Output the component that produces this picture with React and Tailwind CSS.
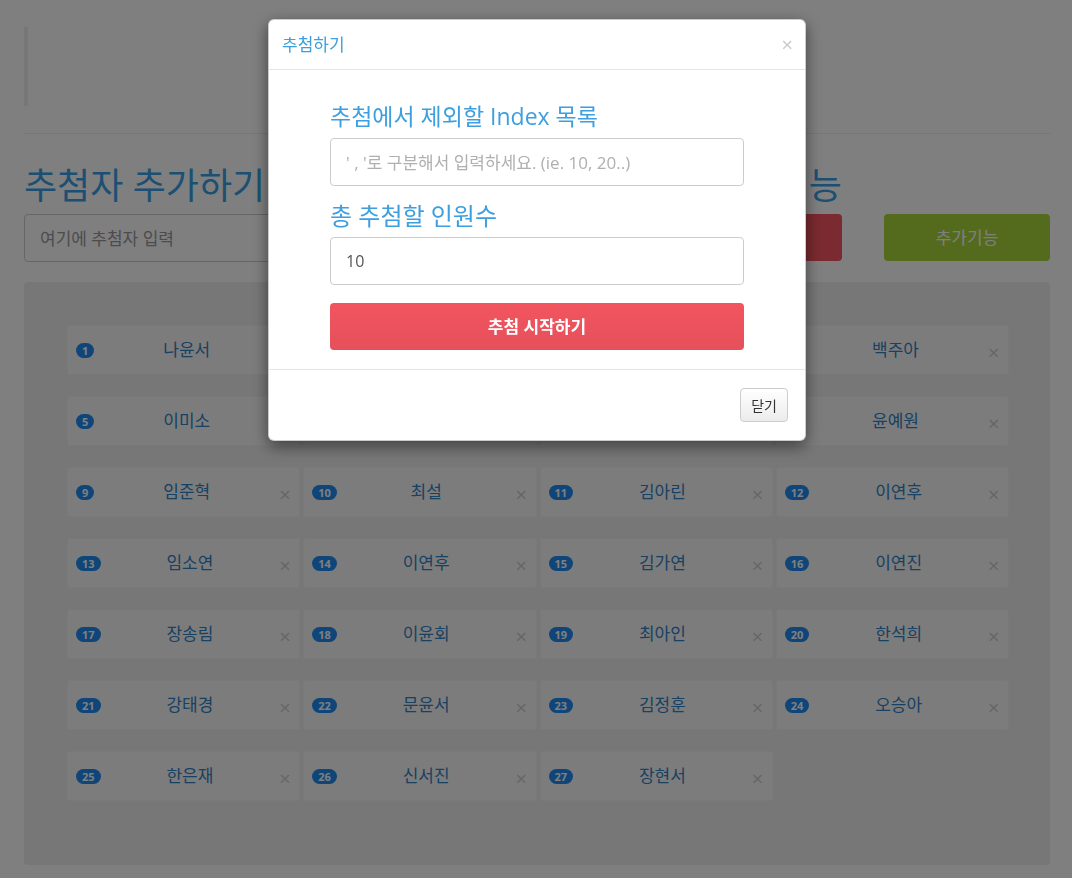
const people = [
  '나윤서', '김민준', '박서연', '백주아',
  '이미소', '정하은', '조은우', '윤예원',
  '임준혁', '최설', '김아린', '이연후',
  '임소연', '이연후', '김가연', '이연진',
  '장송림', '이윤회', '최아인', '한석희',
  '강태경', '문윤서', '김정훈', '오승아',
  '한은재', '신서진', '장현서',
];

function PersonCard({ index, name }) {
  return (
    <div className="h-[50px] flex items-center pl-[8px] pr-[10px] bg-[#f9f9f9] border border-[#f2f2f2] rounded-[2px]">
      <span className="h-[15px] min-w-[17px] px-[6px] rounded-full bg-[#1e8bf0] text-white text-[11px] font-bold leading-[15px] text-center">
        {index}
      </span>
      <span className="flex-1 text-center text-[17px] text-[#3182c4]">{name}</span>
      <span className="w-[10px] text-[20px] leading-none text-[#cccccc] mt-[6px]">×</span>
    </div>
  );
}

function DrawModal() {
  return (
    <div className="fixed inset-0 bg-black/50">
      <div className="w-[538px] ml-[268px] mt-[19px] bg-white rounded-[6px] border border-black/20 shadow-[0_5px_15px_rgba(0,0,0,0.5)]">
        <div className="h-[50px] flex items-center justify-between pl-[13px] pr-[12px] border-b border-[#e5e5e5]">
          <h4 className="text-[17px] text-[#3d9fdf]">추첨하기</h4>
          <button className="text-[20px] leading-none text-[#c8c8c8]">×</button>
        </div>

        <div className="px-[61px] pt-[30px] pb-[19px]">
          <label className="block text-[23px] leading-[32px] text-[#3d9fdf] mb-[6px]">
            추첨에서 제외할 Index 목록
          </label>
          <input
            className="w-full h-[48px] px-[15px] text-[17px] text-[#555] border border-[#cccccc] rounded-[4px] placeholder:text-[#b0b0b0] outline-none"
            placeholder="' , '로 구분해서 입력하세요. (ie. 10, 20..)"
          />

          <label className="block text-[24px] leading-[32px] text-[#3d9fdf] mt-[14px] mb-[5px]">
            총 추첨할 인원수
          </label>
          <input
            className="w-full h-[48px] px-[15px] text-[16px] text-[#555] border border-[#cccccc] rounded-[4px] outline-none"
            defaultValue="10"
          />

          <button className="mt-[18px] w-full h-[47px] rounded-[4px] bg-gradient-to-b from-[#f2555f] to-[#e5505b] text-white text-[17px] font-bold">
            추첨 시작하기
          </button>
        </div>

        <div className="flex justify-end px-[17px] py-[18px] border-t border-[#e5e5e5]">
          <button className="h-[34px] px-[10px] text-[14px] text-[#333] rounded-[4px] border border-[#cccccc] bg-gradient-to-b from-white to-[#ececec]">
            닫기
          </button>
        </div>
      </div>
    </div>
  );
}

export default function App() {
  return (
    <div className="relative min-h-[878px] bg-white font-['Open_Sans','Noto_Sans_CJK_KR',sans-serif]">
      <div className="pl-[24px] pr-[22px] pt-[27px]">
        <div className="h-[79px] border-l-4 border-[#eeeeee]" />
        <hr className="mt-[27px] border-t border-[#eeeeee]" />

        <div className="grid grid-cols-[1fr_166px_166px] gap-x-[42px] mt-[32px]">
          <h2 className="text-[36px] leading-[40px] text-[#3a9fe6] mb-[8px]">추첨자 추가하기</h2>
          <h2 className="text-[36px] leading-[40px] text-[#3a9fe6] mb-[8px] text-right whitespace-nowrap">추첨 기능</h2>
          <div />

          <input
            className="h-[48px] px-[15px] text-[17px] border border-[#cccccc] rounded-[4px] placeholder:text-[#999999] outline-none"
            placeholder="여기에 추첨자 입력"
          />
          <button className="h-[47px] rounded-[4px] bg-[#f45460] text-white text-[17px]">추첨하기</button>
          <button className="h-[47px] rounded-[4px] bg-[#a8d63c] text-white text-[17px]">추가기능</button>
        </div>

        <div className="mt-[20px] bg-[#eeeeee] rounded-[4px] pl-[43px] pr-[41px] pt-[43px] pb-[64px]">
          <div className="grid grid-cols-4 gap-x-[3px] gap-y-[21px]">
            {people.map((name, i) => (
              <PersonCard key={i} index={i + 1} name={name} />
            ))}
          </div>
        </div>
      </div>

      <DrawModal />
    </div>
  );
}
